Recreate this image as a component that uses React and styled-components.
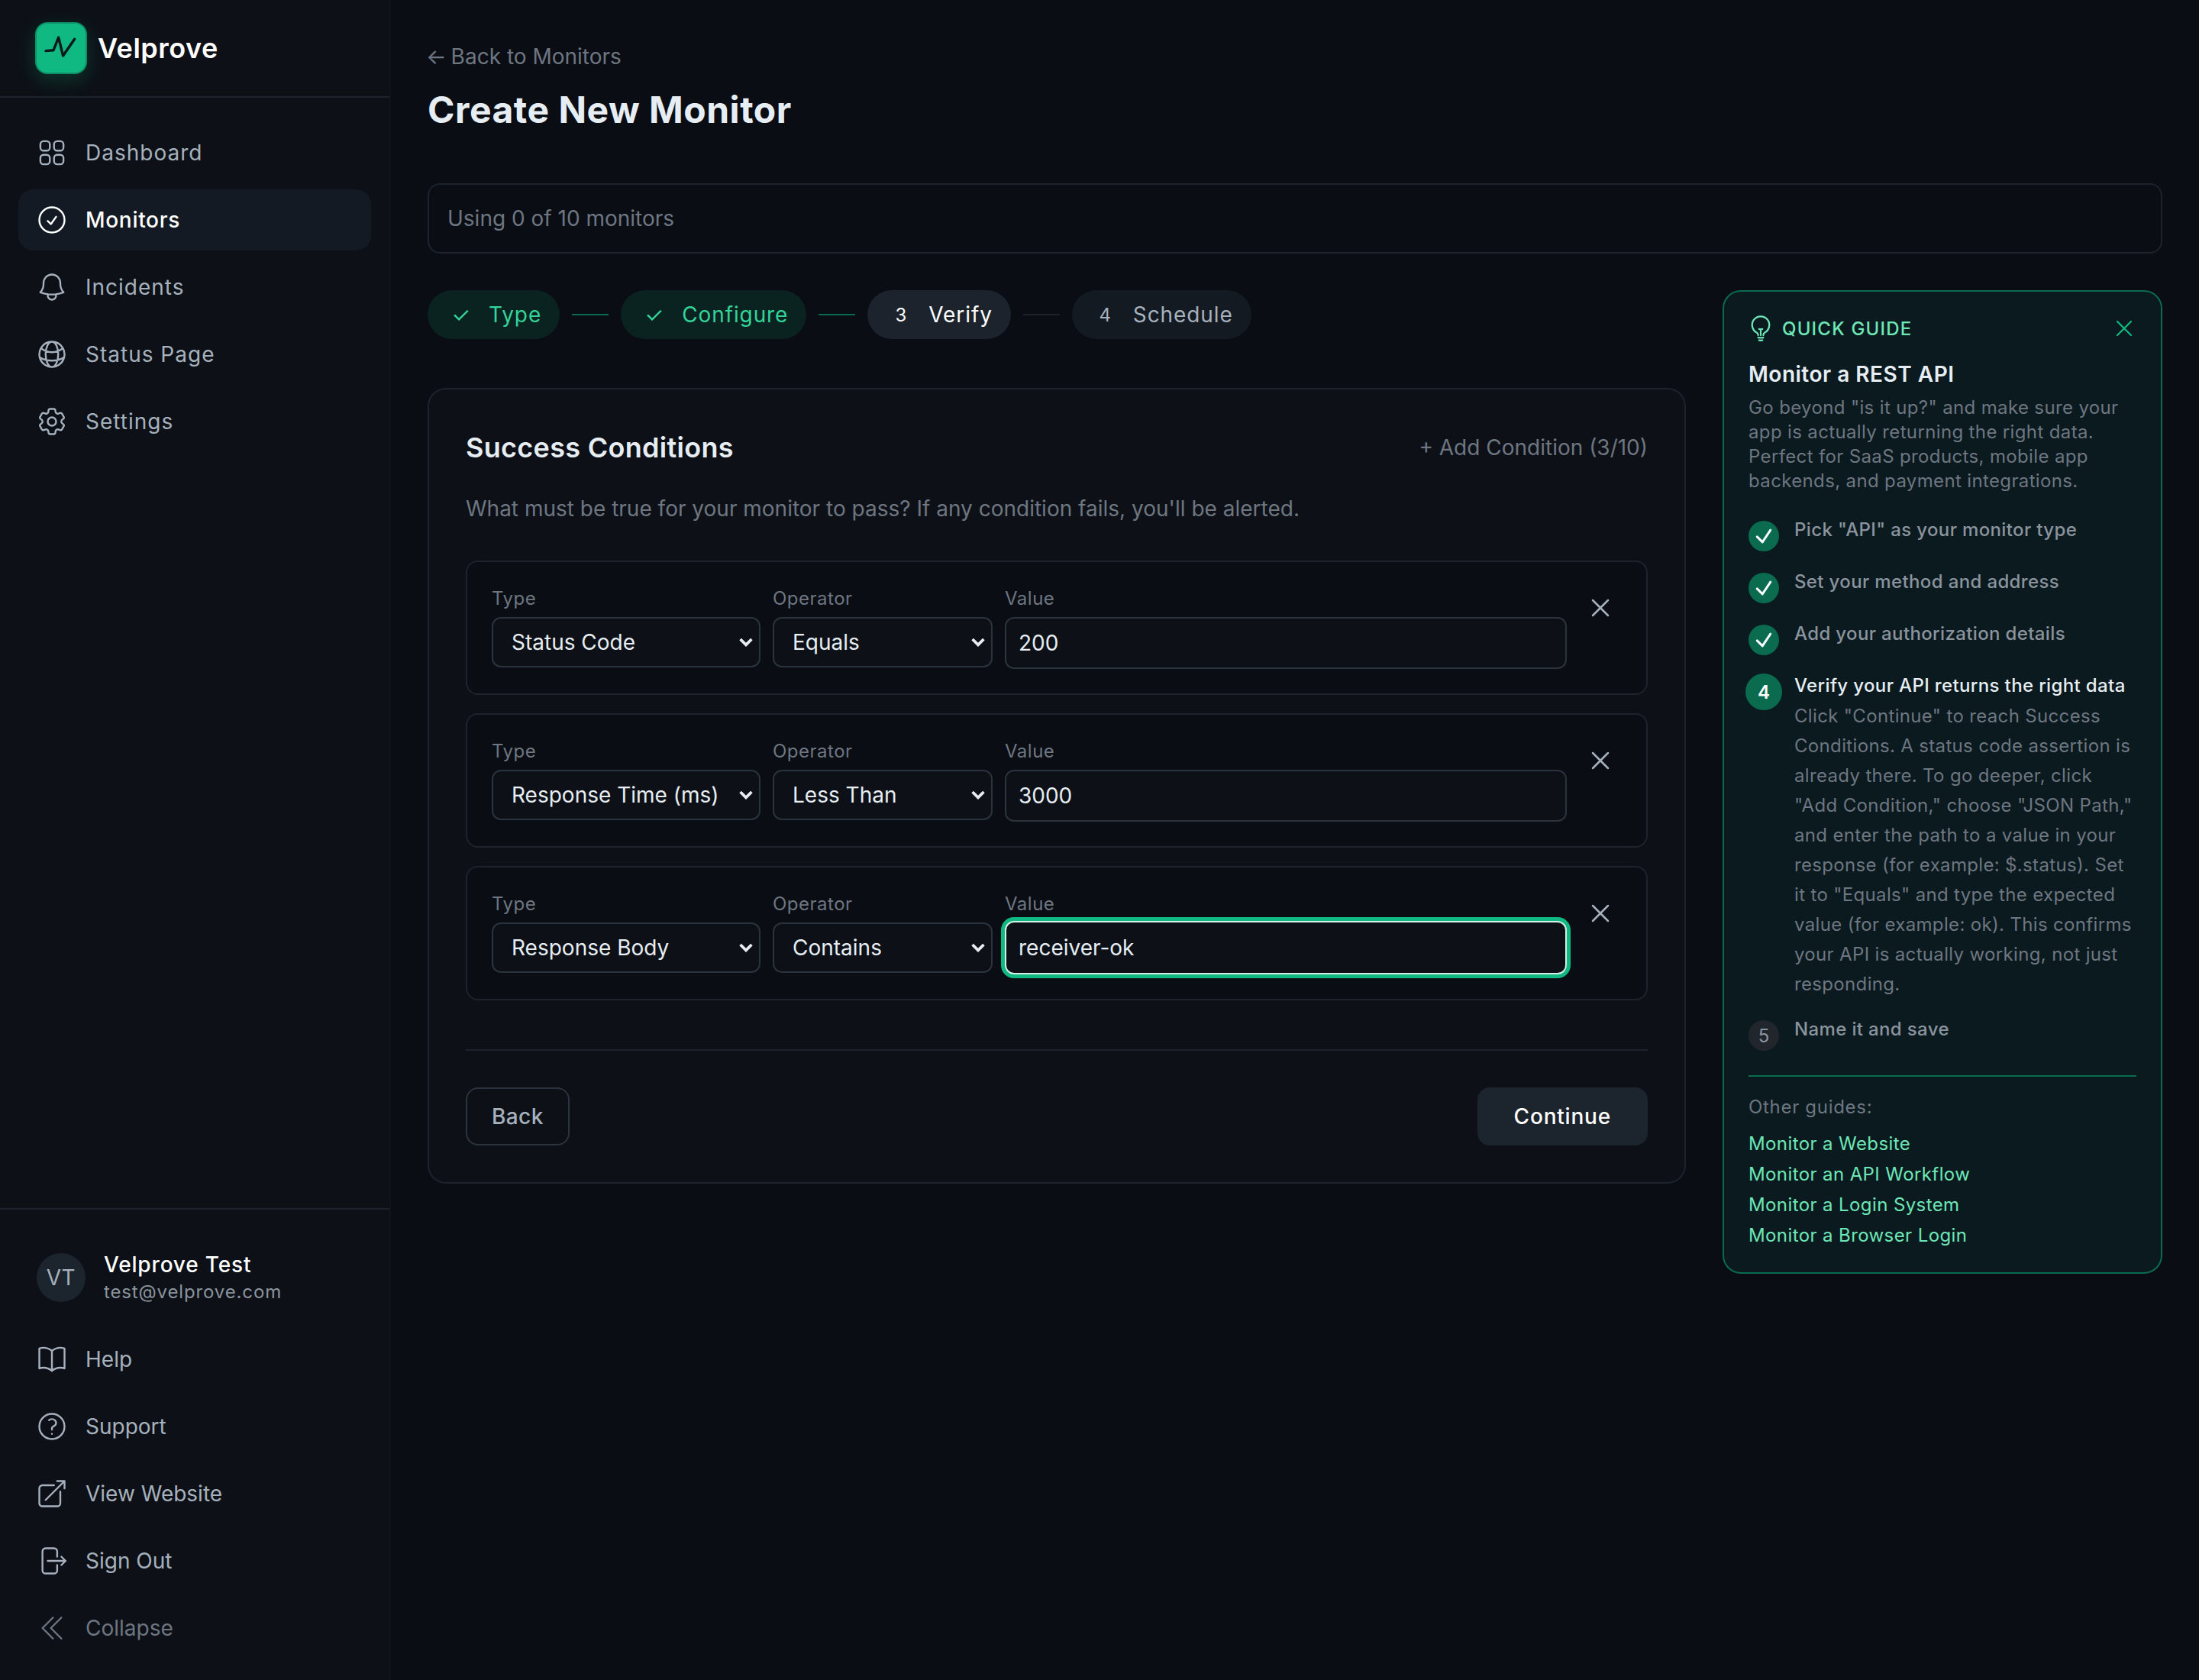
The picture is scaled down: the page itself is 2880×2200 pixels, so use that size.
import React from 'react';
import styled, { createGlobalStyle } from 'styled-components';
import {
  HiOutlineSquares2X2,
  HiOutlineCheckCircle,
  HiOutlineBell,
  HiOutlineGlobeAlt,
  HiOutlineCog6Tooth,
  HiOutlineBookOpen,
  HiOutlineQuestionMarkCircle,
  HiOutlineArrowTopRightOnSquare,
  HiOutlineArrowRightOnRectangle,
  HiOutlineChevronDoubleLeft,
  HiOutlineXMark,
  HiOutlineLightBulb,
  HiOutlineCheck,
} from 'react-icons/hi2';

const mainNav = [
  { label: 'Dashboard', icon: HiOutlineSquares2X2 },
  { label: 'Monitors', icon: HiOutlineCheckCircle, active: true },
  { label: 'Incidents', icon: HiOutlineBell },
  { label: 'Status Page', icon: HiOutlineGlobeAlt },
  { label: 'Settings', icon: HiOutlineCog6Tooth },
];

const footerNav = [
  { label: 'Help', icon: HiOutlineBookOpen },
  { label: 'Support', icon: HiOutlineQuestionMarkCircle },
  { label: 'View Website', icon: HiOutlineArrowTopRightOnSquare },
  { label: 'Sign Out', icon: HiOutlineArrowRightOnRectangle },
  { label: 'Collapse', icon: HiOutlineChevronDoubleLeft, muted: true },
];

const conditions = [
  { type: 'Status Code', operator: 'Equals', value: '200' },
  { type: 'Response Time (ms)', operator: 'Less Than', value: '3000' },
  { type: 'Response Body', operator: 'Contains', value: 'receiver-ok', focused: true },
];

const typeOptions = ['Status Code', 'Response Time (ms)', 'Response Body', 'JSON Path'];
const operatorOptions = ['Equals', 'Less Than', 'Contains'];

const guideLinks = [
  'Monitor a Website',
  'Monitor an API Workflow',
  'Monitor a Login System',
  'Monitor a Browser Login',
];

const App = () => {
  return (
    <Page>
      <GlobalStyle />
      <Sidebar>
        <Brand>
          <LogoMark>
            <svg width="34" height="34" viewBox="0 0 34 34" fill="none">
              <path
                d="M7 18.8 12 18.4 15.3 10 18.3 22 25.8 11.1"
                stroke="#0a1a1a"
                strokeWidth="1.7"
                strokeLinecap="round"
                strokeLinejoin="round"
              />
            </svg>
          </LogoMark>
          <BrandName>Velprove</BrandName>
        </Brand>
        <NavList>
          {mainNav.map((item) => (
            <NavItem key={item.label} $active={item.active} $spaced>
              <NavIcon as={item.icon} />
              {item.label}
            </NavItem>
          ))}
        </NavList>
        <SidebarFooter>
          <UserRow>
            <Avatar>VT</Avatar>
            <UserInfo>
              <UserName>Velprove Test</UserName>
              <UserEmail>test@velprove.com</UserEmail>
            </UserInfo>
          </UserRow>
          <FooterNav>
            {footerNav.map((item) => (
              <NavItem key={item.label} $muted={item.muted}>
                <NavIcon as={item.icon} />
                {item.label}
              </NavItem>
            ))}
          </FooterNav>
        </SidebarFooter>
      </Sidebar>

      <Main>
        <BackLink>
          <BackArrow>←</BackArrow> Back to Monitors
        </BackLink>
        <PageTitle>Create New Monitor</PageTitle>
        <UsageBar>Using 0 of 10 monitors</UsageBar>

        <Columns>
          <div>
            <Stepper>
              <Step $state="done">
                <StepMark $check>✓</StepMark>Type
              </Step>
              <Connector $done />
              <Step $state="done">
                <StepMark $check>✓</StepMark>Configure
              </Step>
              <Connector $done />
              <Step $state="current">
                <StepMark>3</StepMark>Verify
              </Step>
              <Connector />
              <Step>
                <StepMark>4</StepMark>Schedule
              </Step>
            </Stepper>

            <Card>
              <CardHead>
                <CardTitle>Success Conditions</CardTitle>
                <AddButton>+ Add Condition (3/10)</AddButton>
              </CardHead>
              <CardDesc>
                What must be true for your monitor to pass? If any condition fails, you'll be alerted.
              </CardDesc>

              <ConditionList>
                {conditions.map((c) => (
                  <ConditionRow key={c.type}>
                    <Field>
                      <FieldLabel>Type</FieldLabel>
                      <Select defaultValue={c.type}>
                        {typeOptions.map((o) => (
                          <option key={o}>{o}</option>
                        ))}
                      </Select>
                    </Field>
                    <Field>
                      <FieldLabel>Operator</FieldLabel>
                      <Select defaultValue={c.operator}>
                        {operatorOptions.map((o) => (
                          <option key={o}>{o}</option>
                        ))}
                      </Select>
                    </Field>
                    <Field>
                      <FieldLabel>Value</FieldLabel>
                      <ValueInput defaultValue={c.value} $focused={c.focused} />
                    </Field>
                    <RemoveButton>
                      <HiOutlineXMark size={20} />
                    </RemoveButton>
                  </ConditionRow>
                ))}
              </ConditionList>

              <CardActions>
                <BackButton>Back</BackButton>
                <ContinueButton>Continue</ContinueButton>
              </CardActions>
            </Card>
          </div>

          <Guide>
            <GuideHead>
              <GuideLabel>
                <BulbIcon as={HiOutlineLightBulb} />
                QUICK GUIDE
              </GuideLabel>
              <GuideClose>
                <HiOutlineXMark size={18} />
              </GuideClose>
            </GuideHead>
            <GuideTitle>Monitor a REST API</GuideTitle>
            <GuideIntro>
              Go beyond "is it up?" and make sure your app is actually returning the right data.
              Perfect for SaaS products, mobile app backends, and payment integrations.
            </GuideIntro>

            <GuideSteps>
              <GuideStep>
                <StepBadge $state="done">
                  <HiOutlineCheck size={14} strokeWidth={2.5} />
                </StepBadge>
                <StepTitle>Pick "API" as your monitor type</StepTitle>
              </GuideStep>
              <GuideStep>
                <StepBadge $state="done">
                  <HiOutlineCheck size={14} strokeWidth={2.5} />
                </StepBadge>
                <StepTitle>Set your method and address</StepTitle>
              </GuideStep>
              <GuideStep>
                <StepBadge $state="done">
                  <HiOutlineCheck size={14} strokeWidth={2.5} />
                </StepBadge>
                <StepTitle>Add your authorization details</StepTitle>
              </GuideStep>
              <GuideStep>
                <StepBadge $state="current">4</StepBadge>
                <div>
                  <StepTitle $current>Verify your API returns the right data</StepTitle>
                  <StepDesc>
                    Click "Continue" to reach Success Conditions. A status code assertion is already
                    there. To go deeper, click "Add Condition," choose "JSON Path," and enter the path
                    to a value in your response (for example: $.status). Set it to "Equals" and type
                    the expected value (for example: ok). This confirms your API is actually working,
                    not just responding.
                  </StepDesc>
                </div>
              </GuideStep>
              <GuideStep>
                <StepBadge>5</StepBadge>
                <StepTitle>Name it and save</StepTitle>
              </GuideStep>
            </GuideSteps>

            <GuideFooter>
              <OtherLabel>Other guides:</OtherLabel>
              {guideLinks.map((l) => (
                <GuideLink key={l}>{l}</GuideLink>
              ))}
            </GuideFooter>
          </Guide>
        </Columns>
      </Main>
    </Page>
  );
};

const GlobalStyle = createGlobalStyle`
  html, body {
    margin: 0;
    background: #0a0e14;
  }
  * {
    box-sizing: border-box;
  }
`;

// the shot is a 1440x1100 layout at 2x
const Page = styled.div`
  zoom: 2;
  width: 1440px;
  height: 1100px;
  overflow: hidden;
  display: flex;
  background: #0a0e14;
  color: #e6edf3;
  font-family: Inter, "Liberation Sans", sans-serif;
  font-size: 14px;
  color-scheme: dark;
`;

const Sidebar = styled.aside`
  width: 256px;
  flex: none;
  display: flex;
  flex-direction: column;
  background: #0d1117;
  border-right: 1px solid #0f141b;
`;

const Brand = styled.div`
  height: 64px;
  display: flex;
  align-items: center;
  gap: 7px;
  padding: 0 23px;
  border-bottom: 1px solid #1c232c;
`;

const LogoMark = styled.div`
  width: 34px;
  height: 34px;
  border-radius: 8px;
  background: #10b981;
  border: 1px solid #0e8f66;
  display: flex;
  align-items: center;
  justify-content: center;
  box-shadow: 0 4px 12px rgba(16, 185, 129, 0.22);

  svg {
    flex: none;
  }
`;

const BrandName = styled.span`
  font-size: 18px;
  font-weight: 600;
  letter-spacing: 0.25px;
  color: #fff;
`;

const NavList = styled.nav`
  padding: 16px 12px;
  display: flex;
  flex-direction: column;
  gap: 4px;
`;

const NavItem = styled.a`
  height: 40px;
  display: flex;
  align-items: center;
  gap: 12px;
  padding: 0 12px;
  border-radius: 10px;
  font-size: 14px;
  letter-spacing: ${(props) => (props.$active ? '0.35px' : props.$spaced ? '0.5px' : '0')};
  font-weight: ${(props) => (props.$active ? 500 : 400)};
  color: ${(props) => (props.$active ? '#fff' : props.$muted ? '#6e7681' : '#a6b1bd')};
  background: ${(props) => (props.$active ? '#131a23' : 'transparent')};
`;

const NavIcon = styled.svg`
  width: 22px;
  height: 22px;
  margin: 0 -1px;
  flex: none;
  stroke-width: 1.3;
`;

const SidebarFooter = styled.div`
  margin-top: auto;
  height: 309px;
  border-top: 1px solid #1c232c;
  padding: 16px 12px 0;
`;

const UserRow = styled.div`
  display: flex;
  align-items: center;
  gap: 12px;
  padding: 10px 12px 12px;
`;

const Avatar = styled.div`
  width: 32px;
  height: 32px;
  border-radius: 50%;
  background: #1c242d;
  color: #a6b1bd;
  display: flex;
  align-items: center;
  justify-content: center;
  font-size: 14px;
  letter-spacing: 0.3px;
`;

const UserInfo = styled.div`
  display: flex;
  flex-direction: column;
  padding-top: 1px;
`;

const UserName = styled.span`
  font-size: 14px;
  line-height: 18px;
  font-weight: 500;
  letter-spacing: 0.42px;
  color: #fff;
`;

const UserEmail = styled.span`
  font-size: 12px;
  line-height: 18px;
  letter-spacing: 0.43px;
  color: #8b949e;
`;

const FooterNav = styled.div`
  display: flex;
  flex-direction: column;
  gap: 4px;
  margin-top: 3px;
`;

const Main = styled.main`
  flex: 1;
  min-width: 0;
  padding: 27px 24px 0;
`;

const BackLink = styled.a`
  display: block;
  font-size: 14px;
  line-height: 20px;
  color: #6e7681;
`;

const BackArrow = styled.span`
  margin-left: -1px;
  margin-right: -1px;
`;

const PageTitle = styled.h1`
  margin: 9px 0 0;
  font-size: 24px;
  line-height: 32px;
  font-weight: 700;
  letter-spacing: 0.25px;
  color: #e6edf3;
`;

const UsageBar = styled.div`
  margin-top: 32px;
  height: 46px;
  display: flex;
  align-items: center;
  padding: 0 12px;
  border: 1px solid #1c232c;
  border-radius: 8px;
  color: #6e7681;
  font-size: 14px;
`;

const Columns = styled.div`
  margin-top: 24px;
  display: grid;
  grid-template-columns: 1fr 288px;
  gap: 24px;
  align-items: start;
`;

const Stepper = styled.div`
  display: flex;
  align-items: center;
  gap: 8px;
  margin-bottom: 32px;
`;

const stepBg = { done: '#0a2220', current: '#1c232c' };
const stepColor = { done: '#34d399', current: '#fff' };

const Step = styled.div`
  height: 32px;
  display: flex;
  align-items: center;
  gap: 8px;
  padding: 0 12px;
  border-radius: 16px;
  font-size: 14px;
  letter-spacing: 0.45px;
  background: ${(props) => stepBg[props.$state] || '#131a22'};
  color: ${(props) => stepColor[props.$state] || '#a6b1bd'};
`;

const StepMark = styled.span`
  width: 20px;
  text-align: center;
  font-size: ${(props) => (props.$check ? '14px' : '12px')};
`;

const Connector = styled.span`
  width: 24px;
  height: 1px;
  background: ${(props) => (props.$done ? '#0b6b50' : '#1c232c')};
`;

const Card = styled.section`
  background: #0d1117;
  border: 1px solid #1c232c;
  border-radius: 12px;
  padding: 24px;
`;

const CardHead = styled.div`
  display: flex;
  align-items: center;
  justify-content: space-between;
  height: 28px;
`;

const CardTitle = styled.h2`
  margin: 0;
  font-size: 18px;
  font-weight: 600;
  letter-spacing: 0.15px;
  color: #e6edf3;
`;

const AddButton = styled.button`
  padding: 0;
  border: 0;
  background: none;
  font: inherit;
  color: #6e7681;
`;

const CardDesc = styled.p`
  margin: 16px 0 0;
  font-size: 14px;
  line-height: 20px;
  color: #6e7681;
`;

const ConditionList = styled.div`
  margin-top: 24px;
  display: flex;
  flex-direction: column;
  gap: 12px;
`;

const ConditionRow = styled.div`
  display: grid;
  grid-template-columns: 176px 144px 1fr 28px;
  gap: 8px;
  padding: 16px;
  background: #0a0e14;
  border: 1px solid #1c232c;
  border-radius: 8px;
`;

const Field = styled.label`
  display: flex;
  flex-direction: column;
  min-width: 0;
`;

const FieldLabel = styled.span`
  font-size: 12px;
  line-height: 16px;
  margin-bottom: 4px;
  letter-spacing: 0.25px;
  color: #6e7681;
`;

const Select = styled.select`
  appearance: none;
  width: 100%;
  height: 33px;
  padding: 0 12px;
  font: inherit;
  color: #e6edf3;
  background: #0d1117
    url("data:image/svg+xml,%3Csvg xmlns='http://www.w3.org/2000/svg' width='9' height='6' fill='none'%3E%3Cpath d='M.8 1l3.7 3.7L8.2 1' stroke='%23e6edf3' stroke-width='1.9'/%3E%3C/svg%3E")
    no-repeat right 4px center / 9px 6px;
  border: 1px solid #2b333d;
  border-radius: 6px;
  outline: none;
`;

const ValueInput = styled.input`
  width: 100%;
  height: ${(props) => (props.$focused ? '35px' : '34px')};
  margin-top: ${(props) => (props.$focused ? '-1px' : '0')};
  padding: 0 8px;
  font: inherit;
  color: #e6edf3;
  background: #0d1117;
  border: 1px solid ${(props) => (props.$focused ? '#d5efe6' : '#2b333d')};
  border-radius: 6px;
  outline: none;
  box-shadow: ${(props) => (props.$focused ? '0 0 0 2.5px #10b981' : 'none')};
`;

const RemoveButton = styled.button`
  width: 28px;
  height: 28px;
  padding: 0;
  border: 0;
  background: none;
  color: #a6b1bd;
  display: flex;
  align-items: center;
  justify-content: center;
`;

const CardActions = styled.div`
  margin-top: 32px;
  padding-top: 24px;
  border-top: 1px solid #1c232c;
  display: flex;
  justify-content: space-between;
`;

const BackButton = styled.button`
  height: 38px;
  padding: 0 16px;
  font: inherit;
  font-weight: 500;
  letter-spacing: 0.2px;
  color: #a6b1bd;
  background: transparent;
  border: 1px solid #2b333d;
  border-radius: 8px;
`;

const ContinueButton = styled.button`
  height: 38px;
  padding: 0 24px;
  font: inherit;
  font-weight: 500;
  letter-spacing: 0.4px;
  color: #fff;
  background: #1c242d;
  border: 0;
  border-radius: 8px;
`;

const Guide = styled.aside`
  padding: 16px;
  background: #0a1a1f;
  border: 1px solid #0b6b50;
  border-radius: 12px;
`;

const GuideHead = styled.div`
  height: 16px;
  display: flex;
  align-items: center;
  justify-content: space-between;
`;

const GuideLabel = styled.div`
  display: flex;
  align-items: center;
  gap: 6px;
  font-size: 12px;
  font-weight: 500;
  letter-spacing: 0.05em;
  color: #6ee7b7;
`;

const BulbIcon = styled.svg`
  width: 18px;
  height: 18px;
  margin: 0 -1px;
`;

const GuideClose = styled.button`
  padding: 0;
  margin-right: -1px;
  border: 0;
  background: none;
  color: #10b981;
  display: flex;
`;

const GuideTitle = styled.h3`
  margin: 12px 0 4px;
  font-size: 14px;
  line-height: 20px;
  font-weight: 600;
  letter-spacing: 0.25px;
  color: #e6edf3;
`;

const GuideIntro = styled.p`
  margin: 0;
  font-size: 12px;
  line-height: 16px;
  letter-spacing: 0.18px;
  color: #6e7681;
`;

const GuideSteps = styled.div`
  margin-top: 18px;
  display: flex;
  flex-direction: column;
  gap: 14px;
`;

const GuideStep = styled.div`
  display: flex;
  gap: 10px;
`;

const badgeBg = { done: '#0a6b4f', current: '#0a6b4f' };

const StepBadge = styled.span`
  width: 20px;
  height: 20px;
  flex: none;
  border-radius: 50%;
  display: flex;
  align-items: center;
  justify-content: center;
  font-size: 12px;
  font-weight: ${(props) => (props.$state ? 600 : 400)};
  background: ${(props) => badgeBg[props.$state] || '#21262d'};
  color: ${(props) => (props.$state ? '#fff' : '#8b949e')};
  box-shadow: ${(props) => (props.$state === 'current' ? '0 0 0 2px #0a6b4f' : 'none')};
`;

const StepTitle = styled.div`
  font-size: 12px;
  line-height: 12px;
  font-weight: 500;
  letter-spacing: 0.18px;
  color: ${(props) => (props.$current ? '#e6edf3' : '#8b949e')};
`;

const StepDesc = styled.p`
  margin: 4px 0 0;
  font-size: 12px;
  line-height: 19.5px;
  letter-spacing: 0.17px;
  color: #6e7681;
`;

const GuideFooter = styled.div`
  margin-top: 16px;
  padding-top: 12px;
  border-top: 1px solid #0b6b50;
  display: flex;
  flex-direction: column;
`;

const OtherLabel = styled.div`
  font-size: 12px;
  line-height: 16px;
  margin-bottom: 4px;
  letter-spacing: 0.35px;
  color: #6e7681;
`;

const GuideLink = styled.a`
  font-size: 12px;
  line-height: 16px;
  margin-top: 4px;
  letter-spacing: 0.2px;
  color: #6ee7b7;
`;

export default App;
